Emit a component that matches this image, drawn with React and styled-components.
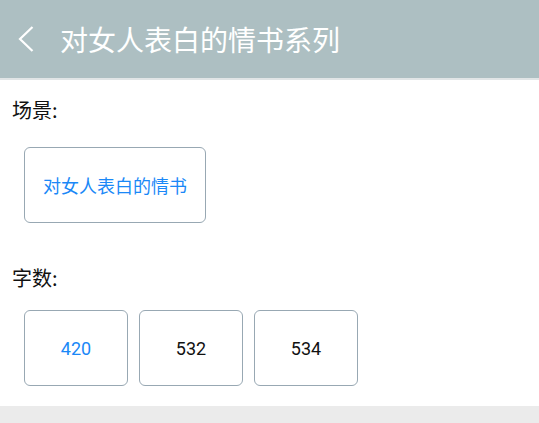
import React from "react";
import styled, { createGlobalStyle } from "styled-components";

const GlobalStyle = createGlobalStyle`
  html, body {
    margin: 0;
    padding: 0;
    background: #ebebeb;
  }
  body {
    font-family: "Roboto", "Noto Sans CJK SC", sans-serif;
  }
`;

const Page = styled.div`
  display: flex;
  flex-direction: column;
  min-height: 100vh;
`;

const Header = styled.div`
  height: 78px;
  background: #adbfc2;
  border-bottom: 2px solid #e1e5e6;
  display: flex;
  align-items: center;
  color: #fff;
`;

const BackButton = styled.button`
  border: none;
  background: none;
  padding: 0;
  margin: 0 0 0 18px;
  width: 16px;
  height: 28px;
  display: flex;
  align-items: center;
  justify-content: center;
`;

const Title = styled.h1`
  margin: 0 0 0 26px;
  font-size: 28px;
  font-weight: 400;
  line-height: 1;
  font-family: "Noto Sans CJK SC", sans-serif;
`;

const Content = styled.div`
  background: #fff;
  padding: 0 0 20px 12px;
`;

const Label = styled.div`
  font-family: "Noto Sans CJK SC", sans-serif;
  font-size: 20px;
  line-height: 26px;
  color: #111;
  margin-top: ${(p) => p.top}px;
`;

const Options = styled.div`
  display: flex;
  gap: 11px;
  padding-left: 12px;
  margin-top: ${(p) => p.top}px;
`;

const Option = styled.div`
  box-sizing: border-box;
  height: 76px;
  min-width: 104px;
  padding: 0 18px;
  border: 1px solid #98a8b3;
  border-radius: 6px;
  display: flex;
  align-items: center;
  justify-content: center;
  font-size: 18px;
  font-family: "Roboto", "Noto Sans CJK SC", sans-serif;
  color: ${(p) => (p.active ? "#1a88f7" : "#111")};
`;

const Footer = styled.div`
  flex: 1;
  background: #ebebeb;
`;

export default function App() {
  return (
    <Page>
      <GlobalStyle />
      <Header>
        <BackButton>
          <svg width="16" height="28" viewBox="0 0 16 28">
            <path d="M14.5 2 L2 14 L14.5 26" fill="none" stroke="#fff" strokeWidth="2.2" />
          </svg>
        </BackButton>
        <Title>对女人表白的情书系列</Title>
      </Header>
      <Content>
        <Label top={17}>场景:</Label>
        <Options top={24}>
          <Option active>对女人表白的情书</Option>
        </Options>
        <Label top={42}>字数:</Label>
        <Options top={19}>
          <Option active>420</Option>
          <Option>532</Option>
          <Option>534</Option>
        </Options>
      </Content>
      <Footer />
    </Page>
  );
}
